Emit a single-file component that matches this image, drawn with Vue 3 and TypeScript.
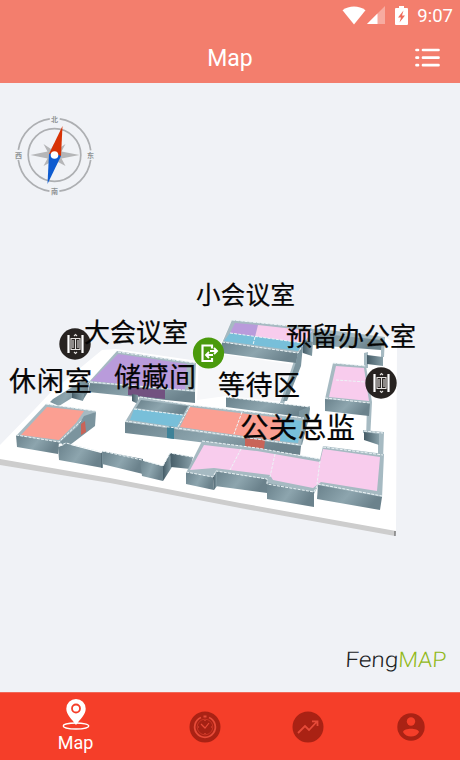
<script setup lang="ts">
interface Shape { c: string; p: string }
interface Label { text: string; x: number; y: number; w: number; s: number }

const floor: Shape[] = [
  { c: 'edge', p: '0,458 110,477 240,502 396,530 395,536 240,508 110,483 0,465' },
  { c: 'floor', p: '0,445 34,410 50,393 102,350 116,349 198,361 222,341 232,320 300,328 385,337 397,344 396,531 240,503 110,478 0,459' },
  { c: 'ground', p: '199,357 221,354 296,365 285,402 226,396 197,400' },
]

const shapes: Shape[] = [
  // north block
  { c: 'top', p: '232,320 320,329 385,337 384,357 381,357 381,346 313,343 300,355 284,404 280,403 296,355 222,343' },
  { c: 'purple', p: '235,323 258,325 255,337 230,333' },
  { c: 'pink', p: '258,325 312,331 304,343 255,337' },
  { c: 'blue', p: '230,333 303,343 298,351 224,341' },
  { c: 'wall', p: '222,342 298,353 296,363 221,353' },
  { c: 'side', p: '298,353 303,345 301,366 287,401 283,401 296,362' },
  { c: 'dark', p: '303,340 313,342 312,356 303,353' },
  { c: 'wall', p: '313,333 382,340 381,350 313,345' },
  { c: 'top', p: '364,353 368,352 368,368 364,368' },
  { c: 'dark', p: '367,355 383,357 383,366 367,364' },
  // east room
  { c: 'top', p: '333,363 366,366 372,402 370,440 366,440 367,405 325,399' },
  { c: 'pink', p: '336,366 364,368 369,401 329,397' },
  { c: 'wall', p: '325,399 370,403 369,416 325,411' },
  { c: 'top', p: '363,430 384,432 383,460 378,454 378,435 363,433' },
  { c: 'dark', p: '364,432 379,434 379,445 364,440' },
  // large meeting room
  { c: 'top', p: '117,351 196,363 195,393 88,383' },
  { c: 'purple', p: '118,354 187,364 185,390 91,381' },
  { c: 'wall', p: '90,383 195,392 195,403 88,392' },
  { c: 'plum', p: '128,387 165,390 165,399 128,395' },
  { c: 'dark', p: '132,394 138,395 138,404 132,401' },
  { c: 'wall', p: '53,399 82,381 89,383 88,392 83,400 75,396 59,406 50,402' },
  { c: 'dark', p: '72,393 84,394 83,401 72,398' },
  // lounge
  { c: 'top', p: '46,404 96,411 88,421 60,444 16,436' },
  { c: 'coral', p: '47,407 84,411 76,423 59,440 21,435' },
  { c: 'side', p: '84,416 96,412 95,426 66,448 60,442 78,426' },
  { c: 'door', p: '81,424 85,421 86,432 81,435' },
  { c: 'wall', p: '16,435 59,442 58,454 17,447' },
  { c: 'wall', p: '58,447 67,444 101,453 103,468 59,460' },
  { c: 'wall', p: '102,451 143,459 143,474 102,464' },
  { c: 'dark', p: '101,453 103,452 103,467 101,468' },
  { c: 'wall', p: '140,460 163,466 163,481 142,476' },
  { c: 'dark', p: '163,466 170,453 172,467 163,481' },
  { c: 'dark', p: '170,453 193,457 190,469 171,467' },
  // central strip
  { c: 'wall', p: '226,397 310,407 308,418 226,407' },
  { c: 'side', p: '299,411 310,406 309,418 302,445 298,443' },
  { c: 'top', p: '140,397 190,405 304,418 301,447 125,422' },
  { c: 'wall', p: '141,400 188,406 183,415 136,408' },
  { c: 'blue', p: '134,409 183,415 177,427 130,420' },
  { c: 'coral', p: '190,407 282,418 280,441 180,427' },
  { c: 'blue', p: '282,418 302,421 298,443 280,441' },
  { c: 'wall', p: '125,422 175,429 301,446 300,455 175,439 125,433' },
  { c: 'teal', p: '167,426 174,427 174,439 167,438' },
  { c: 'door', p: '245,438 265,440 264,449 245,447' },
  // south row
  { c: 'top', p: '202,441 257,448 320,459 323,446 384,454 382,498 318,486 314,494 267,484 267,479 216,472 213,478 186,473' },
  { c: 'pink', p: '204,445 257,451 320,462 323,449 380,457 377,491 321,482 313,488 273,480 270,475 214,468 190,470' },
  { c: 'wall', p: '186,472 213,477 214,490 186,484' },
  { c: 'wall', p: '216,471 267,479 267,493 215,486' },
  { c: 'dark', p: '213,477 217,471 217,486 214,490' },
  { c: 'wall', p: '267,483 314,492 314,507 267,499' },
  { c: 'wall', p: '318,485 382,497 380,510 317,499' },
]

const lines: string[] = [
  '230,333 303,343', '255,337 253,345', '222,342 298,353 304,343', '232,320 320,329', '336,380 366,382',
  '333,363 366,366', '325,398 370,403', '118,352 195,363', '90,382 195,391', '46,404 95,411',
  '16,435 59,442 82,420', '59,446 66,443 101,452', '102,451 142,460 163,466 170,453 192,457',
  '140,397 190,405 304,418', '134,409 183,415', '125,421 300,445', '190,406 178,427', '242,412 234,434',
  '202,441 257,448 320,459', '323,447 383,455', '186,472 213,477 216,471 267,479 267,484 314,492 318,484 382,496',
  '241,449 230,470', '275,454 270,477', '320,461 317,484', '226,397 310,407', '364,431 383,433',
]

const labels: Label[] = [
  { text: '小会议室', x: 196, y: 303.5, w: 99, s: 24.5 },
  { text: '大会议室', x: 84, y: 342, w: 104, s: 26 },
  { text: '预留办公室', x: 286, y: 345.5, w: 130, s: 26 },
  { text: '休闲室', x: 9, y: 391, w: 83, s: 27 },
  { text: '储藏间', x: 114, y: 387, w: 82, s: 27 },
  { text: '等待区', x: 218, y: 395, w: 82, s: 27 },
  { text: '公关总监', x: 240, y: 438, w: 115, s: 28.5 },
]

const lifts = [{ x: 75, y: 344 }, { x: 381, y: 383 }]
</script>

<template>
  <div class="screen">
    <header class="header">
      <div class="status">
        <svg class="wifi" viewBox="0 0 24 19"><path d="M0.5 4.2C7 -.8 17 -.8 23.500 4.200L12 18.500Z" /></svg>
        <svg class="signal" viewBox="0 0 18 18"><path class="weak" d="M18 0V18H0Z" /><path d="M10.500 7.500V18H0Z" /></svg>
        <svg class="battery" viewBox="0 0 13 19"><path d="M4 0h5v2h3a1 1 0 0 1 1 1v15a1 1 0 0 1-1 1H1a1 1 0 0 1-1-1V3a1 1 0 0 1 1-1h3Z" /><path class="bolt" d="M8.500 4.500 3 11.500h3L4.500 16.500 10 9.500H7Z" /></svg>
        <span class="clock">9:07</span>
      </div>
      <div class="toolbar">
        <h1>Map</h1>
        <svg class="list" viewBox="0 0 25 20"><path d="M1.500 2h1.500M8 2H23.500M1.500 9.700h1.500M8 9.700H23.500M1.500 17.200h1.500M8 17.200H23.500" /></svg>
      </div>
    </header>

    <main class="map">
      <svg viewBox="0 83 460 609" width="460" height="609">
        <defs>
          <linearGradient id="wallFill" x1="0" y1="0" x2="1" y2=".35">
            <stop offset="0" stop-color="#6a828c" /><stop offset=".55" stop-color="#8da5ae" /><stop offset="1" stop-color="#6b828c" />
          </linearGradient>
          <linearGradient id="darkFill"><stop offset="0" stop-color="#455c67" /><stop offset="1" stop-color="#88a0a9" /></linearGradient>
        </defs>
        <g class="compass" transform="translate(54.500 155)">
          <circle r="36.500" class="ring outer" />
          <circle r="26.300" class="ring" />
          <path class="star" d="M-24 0-7-3.500-11-11-3.500-6 0-12 3.500-6 11-11 7-3.500 25 0 7 3.500 11 11 3.500 7 0 12-3.500 7-11 11-7 3.500Z" />
          <path class="north" d="M8-29-5.500-1 0 2 6.500 1Z" />
          <path class="south" d="M-7 29-5.500-1 0-2 6.500 1Z" />
          <circle r="3.800" fill="#fff" />
          <text x="0" y="-33.500">北</text><text x="-36" y="2.500">西</text><text x="36" y="2.500">东</text><text x="0" y="38.800">南</text>
        </g>

        <polygon v-for="(f, i) in floor" :key="'f' + i" :class="f.c" :points="f.p" />
        <path class="corner" d="M395 531v5" />
        <polygon v-for="(s, i) in shapes" :key="'s' + i" :class="s.c" :points="s.p" />
        <polyline v-for="(l, i) in lines" :key="'l' + i" class="trim" :points="l" />

        <g v-for="(l, i) in lifts" :key="'e' + i" :transform="`translate(${l.x} ${l.y})`">
          <circle r="15.700" fill="#272321" />
          <path class="rail" d="M-6.500-9V9M7.500-9V9" />
          <path class="cabin" d="M-4-5.500H5V5.500H-4ZM.5-5V5M-2-4V4M3-4V4M-1-8 .5-9.500 2-8M-1 8 .5 9.500 2 8" />
        </g>
        <g transform="translate(208.500 353)">
          <circle r="15.600" fill="#4a9a0c" />
          <path class="exit" d="M3.500-4.500V-7.500H-6V8H3.500V5" />
          <path class="arrow" d="M-2.500 2H4.500M.5-1-2.500 2 .5 5M1.500-2H8.500M5.500-5 8.500-2 5.500 1" />
        </g>

        <text v-for="l in labels" :key="l.text" class="label" :x="l.x" :y="l.y" :font-size="l.s" :textLength="l.w">{{ l.text }}</text>
        <g class="brand" transform="translate(345 667) skewX(-3)">
          <text x="0" y="0" textLength="53" lengthAdjust="spacingAndGlyphs">Feng</text>
          <text class="lime" x="53" y="0" textLength="48" lengthAdjust="spacingAndGlyphs">MAP</text>
        </g>
      </svg>
    </main>

    <nav class="tabs">
      <div class="tab active">
        <svg viewBox="0 0 28 32" width="28" height="32">
          <ellipse cx="14" cy="27" rx="12.800" ry="3" class="base" />
          <path fill-rule="evenodd" d="M14 0A9.700 9.700 0 0 0 4.300 9.700C4.300 16 10 20 14 26 18 20 23.700 16 23.700 9.700A9.700 9.700 0 0 0 14 0Z" />
          <circle cx="14" cy="9.500" r="4" class="hole" />
        </svg>
        <span>Map</span>
      </div>
      <div class="tab">
        <svg viewBox="0 0 32 32" width="32" height="32">
          <circle cx="16" cy="16" r="15.500" /><path class="light" d="M12 6.500A10.300 10.300 0 1 0 20 6.500M14.500 5.500h3" />
          <circle cx="16" cy="16" r="7.800" class="face" /><path class="light thin" d="M12 13l4 4 4-5M16 9v1M16 22v1M9 16h1M22 16h1" />
        </svg>
      </div>
      <div class="tab">
        <svg viewBox="0 0 32 32" width="32" height="32">
          <circle cx="16" cy="16" r="15.500" /><path class="light" d="M6 22 13 15 17 19 25 10.500M20 10.300H25.500V15" />
        </svg>
      </div>
      <div class="tab">
        <svg viewBox="0 0 32 32" width="32" height="32">
          <circle cx="16" cy="16" r="13.700" /><circle cx="16" cy="10.500" r="4.200" class="cut" /><path class="cut" d="M8 21C9 16.800 23 16.800 24 21 21 27 11 27 8 21Z" />
        </svg>
      </div>
    </nav>
  </div>
</template>

<style>
body { margin: 0; }
</style>

<style scoped>
.screen { width: 460px; height: 760px; display: flex; flex-direction: column; overflow: hidden; background: #f0f2f6; font-family: Roboto, "Noto Sans CJK SC", sans-serif; }
.header { height: 83px; box-sizing: border-box; background: #f37e6d; color: #fff; display: flex; flex-direction: column; }
.status { height: 32px; display: flex; align-items: center; justify-content: flex-end; padding-right: 7px; }
.status svg { fill: #fff; margin-top: -2px; }
.status .wifi { width: 24px; height: 19px; margin-right: 1px; }
.status .signal { width: 18px; height: 18px; margin-right: 10px; }
.signal .weak { opacity: .35; }
.status .battery { width: 13px; height: 19px; margin-right: 9px; }
.status .bolt { fill: #ef6c5c; }
.clock { font-size: 18.500px; line-height: 32px; }
.toolbar { height: 51px; display: grid; grid-template-columns: 1fr auto 1fr; align-items: center; padding-right: 20px; padding-left: 20px; }
h1 { grid-column: 2; margin: 0; padding-top: 2px; font-size: 23px; font-weight: 400; line-height: 49px; }
.list { justify-self: end; width: 25px; height: 20px; fill: none; stroke: #fff; stroke-width: 2.700; stroke-linecap: round; }
.map { height: 609px; }
.map svg { display: block; }
.ring { fill: none; stroke: #adafb2; stroke-width: 1.700; }
.outer { stroke-dasharray: 47.330 10; stroke-dashoffset: -5; }
.star { fill: #b5b6b8; }
.north { fill: #d83205; }
.south { fill: #0d5bd0; }
.compass text { font: bold 7px "Noto Sans CJK SC", sans-serif; fill: #8f9295; text-anchor: middle; }
.floor { fill: #fff; }
.edge { fill: #cdcdcd; }
.ground { fill: #f6f7f9; }
.corner { stroke: #555; }
.top { fill: #a6bac2; }
.wall { fill: url(#wallFill); }
.side { fill: #7b949e; }
.dark { fill: url(#darkFill); }
.pink { fill: #f8cced; }
.purple { fill: #b99bdb; }
.blue { fill: #78bfd9; }
.coral { fill: #fb9f92; }
.plum { fill: #725180; }
.door { fill: #c96458; }
.teal { fill: #3e8298; }
.trim { fill: none; stroke: #edf5f7; stroke-width: 1; stroke-dasharray: 3 1.200; }
.rail { stroke: #fff; stroke-width: 2.200; }
.cabin { fill: none; stroke: #e5e3e1; stroke-width: 1.100; }
.exit { fill: none; stroke: #fff; stroke-width: 2.200; }
.arrow { fill: none; stroke: #fff; stroke-width: 1.900; }
.label { font-family: "Noto Sans CJK SC", sans-serif; fill: #050505; stroke: #050505; stroke-width: .25; }
.brand text { font-family: Roboto, sans-serif; font-weight: 300; font-size: 21.500px; fill: #202225; }
.brand .lime { fill: #91b918; }
.tabs { height: 68px; box-sizing: border-box; background: #f53e29; display: grid; grid-template-columns: 153px 103px 103px 103px; border-top: 1px solid #f06858; }
.tab { display: flex; align-items: center; justify-content: center; fill: #aa2214; padding-top: 1px; }
.active { flex-direction: column; justify-content: flex-start; padding-top: 6px; padding-right: 2px; fill: #fff; color: #fff; }
.active span { font-size: 18px; line-height: 24px; }
.base { fill: none; stroke: #fff; stroke-width: 1.300; }
.hole { fill: none; stroke: #f53e29; stroke-width: 1.800; }
.light { fill: none; stroke: #e64b39; stroke-width: 1.800; }
.thin { stroke-width: 1.200; }
.face { fill: #a42114; stroke: #c93525; }
.cut { fill: #f53e29; }
</style>
